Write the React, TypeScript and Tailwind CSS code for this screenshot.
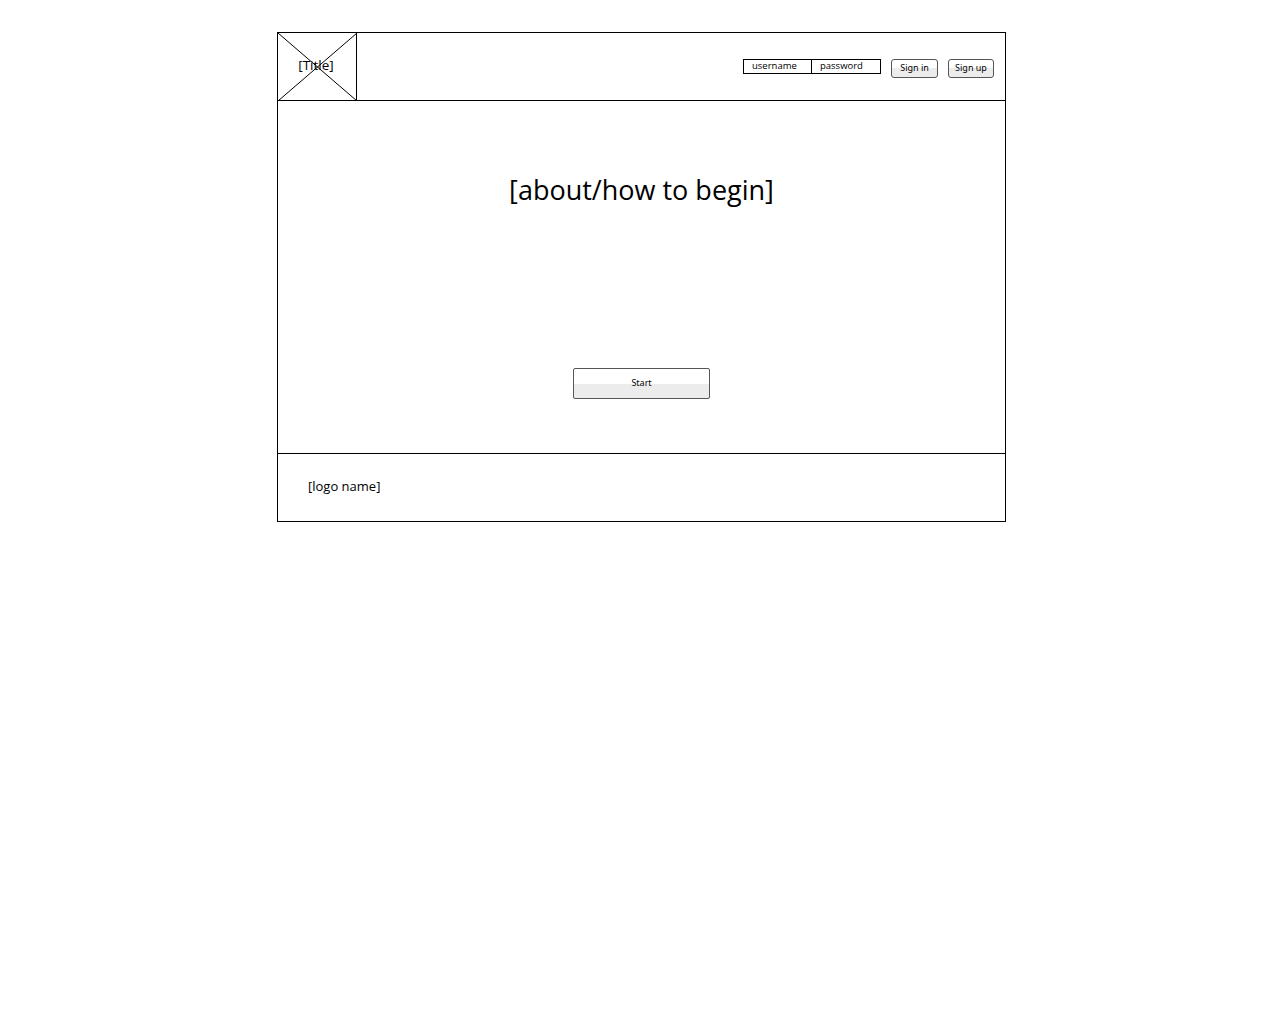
import React from "react";

export default function App() {
  return (
    <div className="min-h-[1024px] w-[1280px] bg-white" style={{ fontFamily: '"Open Sans", "Noto Sans", sans-serif' }}>
      <div className="pt-[32px] pl-[277px]">
        <div className="w-[729px] border border-black flex flex-col">
          {/* header */}
          <div className="h-[68px] border-b border-black flex">
            <div className="relative w-[79px] h-[68px] border-r border-black">
              <svg className="absolute inset-0" width="79" height="68" viewBox="0 0 79 68">
                <line x1="0" y1="0" x2="79" y2="68" stroke="#000" strokeWidth="1" />
                <line x1="79" y1="0" x2="0" y2="68" stroke="#000" strokeWidth="1" />
              </svg>
              <div className="absolute inset-0 flex items-center justify-center pb-[3px] pr-[2px] text-[13.5px] text-black">[Title]</div>
            </div>
            <div className="flex-1 flex items-start pt-[26px] pl-[386px]">
              <div className="flex border border-black h-[15px]">
                <div className="w-[68px] border-r border-black text-[9.5px] leading-[11px] pl-[8px] text-black">username</div>
                <div className="w-[68px] text-[9.5px] leading-[11px] pl-[8px] text-black">password</div>
              </div>
              <div className="ml-[10px] w-[47px] h-[19px] border border-[#555] rounded-[3px] bg-[linear-gradient(#fff_0%,#fff_50%,#ececec_50%,#ececec_100%)] text-[9px] leading-[15px] text-center text-black" style={{ fontFamily: '"Noto Sans", sans-serif' }}>Sign in</div>
              <div className="ml-[10px] w-[46px] h-[19px] border border-[#555] rounded-[3px] bg-[linear-gradient(#fff_0%,#fff_50%,#ececec_50%,#ececec_100%)] text-[9px] leading-[15px] text-center text-black" style={{ fontFamily: '"Noto Sans", sans-serif' }}>Sign up</div>
            </div>
          </div>
          {/* main */}
          <div className="h-[353px] border-b border-black flex flex-col items-center">
            <div className="mt-[72px] text-[27px] leading-[34px] text-black">[about/how to begin]</div>
            <div className="mt-[161px] w-[137px] h-[31px] border border-[#555] rounded-[2px] bg-[linear-gradient(#fff_0%,#fff_50%,#ececec_50%,#ececec_100%)] text-[9px] leading-[27px] text-center text-black" style={{ fontFamily: '"Noto Sans", sans-serif' }}>Start</div>
          </div>
          {/* footer */}
          <div className="h-[67px] flex items-center pl-[30px] pb-[2px]">
            <div className="text-[13px] text-black">[logo name]</div>
          </div>
        </div>
      </div>
    </div>
  );
}
